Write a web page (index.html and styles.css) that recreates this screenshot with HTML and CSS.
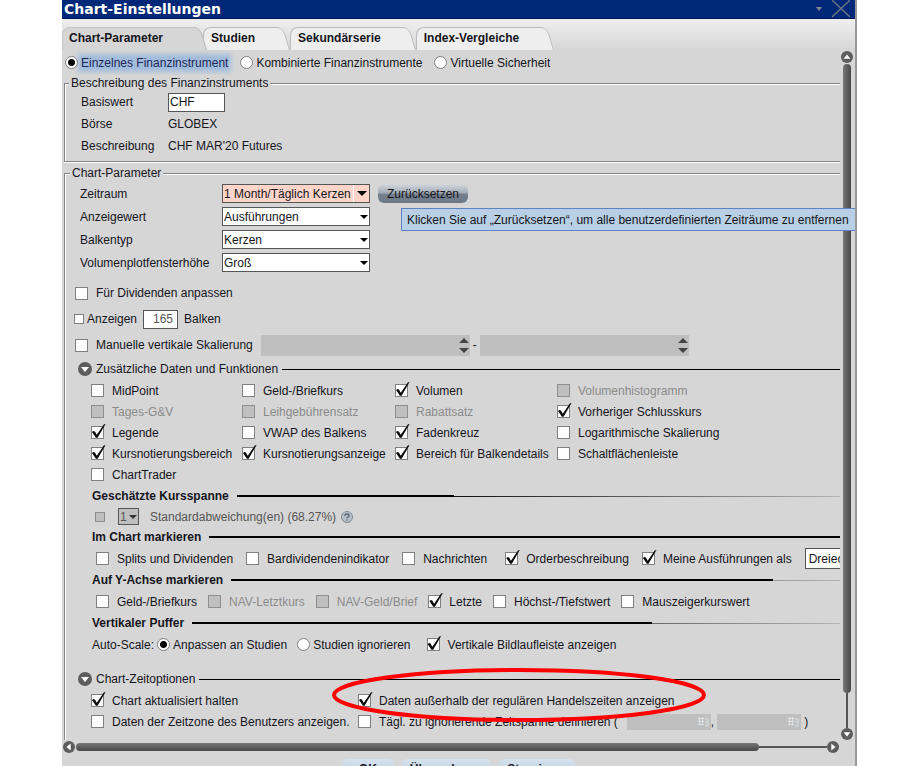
FILE: index.html
```html
<!DOCTYPE html>
<html lang="de">
<head>
<meta charset="utf-8">
<title>Chart-Einstellungen</title>
<link rel="stylesheet" href="styles.css">
</head>
<body>
<main class="window">
  <header class="titlebar">
    <h1>Chart-Einstellungen</h1>
    <button class="title-btn" type="button" aria-label="Menü"><svg width="6" height="4" viewBox="0 0 6 4"><path d="M0 0H6L3 4Z" fill="#7f8890"/></svg></button>
    <button class="title-btn" type="button" aria-label="Schließen"><svg width="18" height="18" viewBox="0 0 18 18"><path d="M0 0L18 17M18 0L0 17" stroke="#6c7884" stroke-width="1.3" fill="none"/></svg></button>
  </header>

  <nav class="tabs">
    <button class="tab active" type="button">Chart-Parameter<svg class="cap" viewBox="0 0 14 23"><path class="fill" d="M0 0C5 0 7 2 9 7L14 23H0Z"/><path class="edge" d="M0 .5C5 .5 7 3 9 8L13.500 23"/></svg></button>
    <button class="tab" type="button">Studien<svg class="cap" viewBox="0 0 14 23"><path class="fill" d="M0 0C5 0 7 2 9 7L14 23H0Z"/><path class="edge" d="M0 .5C5 .5 7 3 9 8L13.500 23"/></svg></button>
    <button class="tab" type="button">Sekundärserie<svg class="cap" viewBox="0 0 14 23"><path class="fill" d="M0 0C5 0 7 2 9 7L14 23H0Z"/><path class="edge" d="M0 .5C5 .5 7 3 9 8L13.500 23"/></svg></button>
    <button class="tab" type="button">Index-Vergleiche<svg class="cap" viewBox="0 0 14 23"><path class="fill" d="M0 0C5 0 7 2 9 7L14 23H0Z"/><path class="edge" d="M0 .5C5 .5 7 3 9 8L13.500 23"/></svg></button>
  </nav>

  <div class="body">
    <div class="content">
      <div class="row modes">
        <label class="radio focus"><input type="radio" name="mode" checked><span>Einzelnes Finanzinstrument</span></label>
        <label class="radio"><input type="radio" name="mode"><span>Kombinierte Finanzinstrumente</span></label>
        <label class="radio"><input type="radio" name="mode"><span>Virtuelle Sicherheit</span></label>
      </div>

      <fieldset class="group instrument">
        <legend>Beschreibung des Finanzinstruments</legend>
        <div class="pair"><label for="sym">Basiswert</label><input class="text" id="sym" type="text" value="CHF"></div>
        <div class="pair"><span>Börse</span><span>GLOBEX</span></div>
        <div class="pair"><span>Beschreibung</span><span>CHF MAR'20 Futures</span></div>
      </fieldset>

      <fieldset class="group params">
        <legend>Chart-Parameter</legend>
        <div class="field"><label for="period">Zeitraum</label><span class="select warn"><select id="period"><option>1 Month/Täglich Kerzen</option></select></span><button class="reset" type="button">Zurücksetzen</button></div>
        <div class="field"><label for="shown">Anzeigewert</label><span class="select"><select id="shown"><option>Ausführungen</option></select></span></div>
        <div class="field"><label for="bar">Balkentyp</label><span class="select"><select id="bar"><option>Kerzen</option></select></span></div>
        <div class="field"><label for="vol">Volumenplotfensterhöhe</label><span class="select"><select id="vol"><option>Groß</option></select></span></div>

        <div class="row option"><label class="check"><input type="checkbox"><span>Für Dividenden anpassen</span></label></div>
        <div class="row option"><label class="check small"><input type="checkbox"><span>Anzeigen</span></label><input class="text bars" id="bars" type="text" value="165"><label for="bars">Balken</label></div>
        <div class="row option scale">
          <label class="check"><input type="checkbox"><span>Manuelle vertikale Skalierung</span></label>
          <span class="spin"><input type="text" aria-label="Skalierung von" disabled><svg width="10" height="15" viewBox="0 0 10 15"><path d="M0 5L5 0L10 5ZM0 10H10L5 15Z" fill="#444"/></svg></span>
          <span>-</span>
          <span class="spin"><input type="text" aria-label="Skalierung bis" disabled><svg width="10" height="15" viewBox="0 0 10 15"><path d="M0 5L5 0L10 5ZM0 10H10L5 15Z" fill="#444"/></svg></span>
        </div>

        <div class="fold"><button type="button" class="round" aria-label="Einklappen"><svg viewBox="0 0 14 14"><circle cx="7" cy="7" r="7"/><path d="M3 5H11L7 10Z"/></svg></button><span>Zusätzliche Daten und Funktionen</span><i></i></div>
        <div class="checks">
          <label class="check"><input type="checkbox"><span>MidPoint</span></label>
          <label class="check"><input type="checkbox"><span>Geld-/Briefkurs</span></label>
          <label class="check"><input type="checkbox" checked><span>Volumen</span></label>
          <label class="check"><input type="checkbox" disabled><span>Volumenhistogramm</span></label>
          <label class="check"><input type="checkbox" disabled><span>Tages-G&amp;V</span></label>
          <label class="check"><input type="checkbox" disabled><span>Leihgebührensatz</span></label>
          <label class="check"><input type="checkbox" disabled><span>Rabattsatz</span></label>
          <label class="check"><input type="checkbox" checked><span>Vorheriger Schlusskurs</span></label>
          <label class="check"><input type="checkbox" checked><span>Legende</span></label>
          <label class="check"><input type="checkbox"><span>VWAP des Balkens</span></label>
          <label class="check"><input type="checkbox" checked><span>Fadenkreuz</span></label>
          <label class="check"><input type="checkbox"><span>Logarithmische Skalierung</span></label>
          <label class="check"><input type="checkbox" checked><span>Kursnotierungsbereich</span></label>
          <label class="check"><input type="checkbox" checked><span>Kursnotierungsanzeige</span></label>
          <label class="check"><input type="checkbox" checked><span>Bereich für Balkendetails</span></label>
          <label class="check"><input type="checkbox"><span>Schaltflächenleiste</span></label>
          <label class="check"><input type="checkbox"><span>ChartTrader</span></label>
        </div>

        <h2 class="range">Geschätzte Kursspanne<i></i></h2>
        <div class="row deviation">
          <input type="checkbox" id="dev" disabled>
          <span class="select mini"><select disabled aria-label="Anzahl"><option>1</option></select></span>
          <label for="dev">Standardabweichung(en) (68.27%)</label>
          <svg class="help" width="12" height="12" viewBox="0 0 12 12"><circle cx="6" cy="6" r="5.500" fill="#b4bfcc" stroke="#7f8994"/><path d="M4 4.800C4 2.500 8 2.500 8 4.700C8 6 6 6 6 7.300M6 8.400V9.600" fill="none" stroke="#56616e" stroke-width="1.400"/></svg>
        </div>

        <h2 class="full">Im Chart markieren<i></i></h2>
        <div class="row marks">
          <label class="check"><input type="checkbox"><span>Splits und Dividenden</span></label>
          <label class="check"><input type="checkbox"><span>Bardividendenindikator</span></label>
          <label class="check wide"><input type="checkbox"><span>Nachrichten</span></label>
          <label class="check"><input type="checkbox" checked><span>Orderbeschreibung</span></label>
          <label class="check"><input type="checkbox" checked><span>Meine Ausführungen als</span></label>
          <select class="shape" aria-label="Form"><option>Dreiecke</option></select>
        </div>

        <h2 class="axis">Auf Y-Achse markieren<i></i></h2>
        <div class="row marks dense">
          <label class="check"><input type="checkbox"><span>Geld-/Briefkurs</span></label>
          <label class="check"><input type="checkbox" disabled><span>NAV-Letztkurs</span></label>
          <label class="check"><input type="checkbox" disabled><span>NAV-Geld/Brief</span></label>
          <label class="check"><input type="checkbox" checked><span>Letzte</span></label>
          <label class="check"><input type="checkbox"><span>Höchst-/Tiefstwert</span></label>
          <label class="check"><input type="checkbox"><span>Mauszeigerkurswert</span></label>
        </div>

        <h2 class="buffer">Vertikaler Puffer<i></i></h2>
        <div class="row auto">
          <span>Auto-Scale:</span>
          <label class="radio"><input type="radio" name="auto" checked><span>Anpassen an Studien</span></label>
          <label class="radio"><input type="radio" name="auto"><span>Studien ignorieren</span></label>
          <label class="check"><input type="checkbox" checked><span>Vertikale Bildlaufleiste anzeigen</span></label>
        </div>

        <div class="fold time"><button type="button" class="round" aria-label="Einklappen"><svg viewBox="0 0 14 14"><circle cx="7" cy="7" r="7"/><path d="M3 5H11L7 10Z"/></svg></button><span>Chart-Zeitoptionen</span><i></i></div>
        <div class="times">
          <label class="check"><input type="checkbox" checked><span>Chart aktualisiert halten</span></label>
          <div class="marked">
            <label class="check"><input type="checkbox" checked><span>Daten außerhalb der regulären Handelszeiten anzeigen</span></label>
            <svg class="ellipse" width="376" height="56" viewBox="0 0 376 56"><ellipse cx="188" cy="28" rx="185" ry="25"/></svg>
          </div>
          <label class="check"><input type="checkbox"><span>Daten der Zeitzone des Benutzers anzeigen.</span></label>
          <div class="row ignore">
            <label class="check"><input type="checkbox"><span>Tägl. zu ignorierende Zeitspanne definieren (</span></label>
            <span class="clock"><input type="text" aria-label="Beginn" disabled><svg width="11" height="10" viewBox="0 0 11 10"><path d="M0 1.500H6M0 4.500H6M0 7.500H6M1.500 0V8M4.500 0V8M7 2H10V5H7M10 5V9H7" fill="none" stroke="#dce1e5"/></svg></span>
            <span>,</span>
            <span class="clock"><input type="text" aria-label="Ende" disabled><svg width="11" height="10" viewBox="0 0 11 10"><path d="M0 1.500H6M0 4.500H6M0 7.500H6M1.500 0V8M4.500 0V8M7 2H10V5H7M10 5V9H7" fill="none" stroke="#dce1e5"/></svg></span>
            <span class="close">)</span>
          </div>
        </div>
      </fieldset>
    </div>

    <div class="vscroll">
      <button type="button" class="round" aria-label="Nach oben"><svg viewBox="0 0 14 14"><circle cx="7" cy="7" r="7"/><path d="M3 9H11L7 4Z"/></svg></button>
      <div class="thumb"></div><div class="track"></div>
      <button type="button" class="round" aria-label="Nach unten"><svg viewBox="0 0 14 14"><circle cx="7" cy="7" r="7"/><path d="M3 5H11L7 10Z"/></svg></button>
    </div>
  </div>

  <div class="hscroll">
    <button type="button" class="round" aria-label="Nach links"><svg viewBox="0 0 14 14"><circle cx="7" cy="7" r="7"/><path d="M9 3V11L4 7Z"/></svg></button>
    <div class="thumb"></div><div class="track"></div>
    <button type="button" class="round" aria-label="Nach rechts"><svg viewBox="0 0 14 14"><circle cx="7" cy="7" r="7"/><path d="M5 3V11L10 7Z"/></svg></button>
  </div>

  <footer class="actions">
    <button type="button">OK</button>
    <button type="button">Übernehmen</button>
    <button type="button">Stornieren</button>
  </footer>

  <div class="tooltip" role="tooltip">Klicken Sie auf „Zurücksetzen“, um alle benutzerdefinierten Zeiträume zu entfernen</div>
</main>
</body>
</html>
```
FILE: styles.css
```css
* { box-sizing: border-box; }

body {
  margin: 0;
  background: #fff;
  color: #15151c;
  font: 12px/16px "Liberation Sans", Arial, sans-serif;
}

button, input, select { font: inherit; color: inherit; margin: 0; }
button { padding: 0; border: 0; background: none; }

.window {
  position: relative;
  height: 100vh;
  margin: 0 63px 0 62px;
  overflow: hidden;
  background: #d6d6d6;
  border-right: 2px solid #999;
  white-space: nowrap;
}

/* Title bar and tabs */
.titlebar {
  display: flex;
  align-items: center;
  gap: 10px;
  height: 19px;
  padding: 0 5px 0 2px;
  background: #002878;
  border-bottom: 1px solid #001658;
}
.titlebar h1 {
  flex: 1;
  margin: 0;
  color: #fff;
  font: bold 14px/18px "DejaVu Sans", Verdana, sans-serif;
}
.title-btn { display: flex; }

.tabs {
  display: flex;
  height: 31px;
  padding-top: 8px;
  background: linear-gradient(#efefef, #d6d6d6);
}
.tab {
  position: relative;
  height: 23px;
  margin-right: 14px;
  padding: 0 21px 2px 7px;
  border: 1px solid #bbb;
  border-width: 1px 0 0 1px;
  border-top-left-radius: 8px;
  background: #eee;
  font-weight: bold;
}
.cap { position: absolute; left: 100%; top: -1px; width: 14px; height: 23px; }
.cap .fill { fill: #eee; }
.cap .edge { fill: none; stroke: #bbb; }
.tab.active {
  z-index: 1;
  margin-right: 10px;
  padding: 0 30px 2px 6px;
  background: #d6d6d6;
  border-color: #c4c4c4;
}
.active .cap .fill { fill: #d6d6d6; }

/* Scrollable body */
.body { display: grid; grid-template-columns: minmax(0, 1fr) 15px; }
.content {
  display: flex;
  flex-direction: column;
  min-width: 0;
  height: 690px;
  padding-left: 2px;
  overflow: hidden;
}
.row { display: flex; align-items: center; }
.modes { height: 25px; gap: 12px; padding-left: 1px; }

.check, .radio { display: flex; align-items: center; }
.check { gap: 8px; }
.radio { gap: 3px; }
.focus span { background: #a3bcdc; box-shadow: 0 0 5px 3px #a3bcdc; line-height: 12px; color: #1c2858; }
.focus input { z-index: 1; }

input[type="checkbox"], input[type="radio"] {
  appearance: none;
  flex: none;
  position: relative;
  width: 13px;
  height: 13px;
  border: 1px solid #808080;
  background: #fff;
}
input[type="radio"] { border-radius: 50%; }
input[type="radio"]:checked { background: radial-gradient(circle, #000 0 3px, #fff 4px); }
input[type="checkbox"]:checked::after {
  content: "";
  position: absolute;
  left: 0;
  top: -3px;
  width: 14px;
  height: 14px;
  background: #0c0c0c;
  clip-path: polygon(0 58%, 10% 50%, 21% 54%, 34% 76%, 84% 4%, 97% 0, 40% 98%, 28% 98%);
}
input[type="checkbox"]:disabled { background: #bfbfbf; border-color: #8e8e8e; }
.check:has(:disabled) { color: #8b8b8b; }

.group {
  margin: 0;
  padding: 0;
  border: 1px solid #858585;
  border-right: 0;
  box-shadow: inset 1px 1px #fff, 0 1px #fff;
  min-width: 0;
}
.group legend { margin-left: 4px; padding: 0 2px; line-height: 16px; background: #d6d6d6; }
.instrument { margin-bottom: 3px; padding-bottom: 4px; }
.pair {
  display: grid;
  grid-template-columns: 87px auto 1fr;
  align-items: center;
  height: 22px;
  padding-left: 16px;
}
.text { height: 19px; padding: 0 1px; border: 1px solid #555; background: #fff; }
.pair .text { width: 57px; }

.params { flex: 1; padding: 1px 0 0 1px; border-bottom: 0; }
.field {
  display: grid;
  grid-template-columns: 142px 148px 90px;
  align-items: center;
  height: 23px;
  padding-left: 14px;
}
.select { position: relative; display: flex; }
.select select, .shape {
  appearance: none;
  width: 100%;
  height: 19px;
  padding: 0 1px;
  border: 1px solid #555;
  border-radius: 0;
  background: #fff;
  opacity: 1;
}
.select::after {
  content: "";
  position: absolute;
  right: 2px;
  top: 8px;
  border: 4px solid transparent;
  border-top-color: #000;
  border-bottom: 0;
  pointer-events: none;
}
.warn select {
  background: linear-gradient(#fff, #fff) right 15px top / 1px 100% no-repeat #ffd5ca;
}
.warn::after { right: 3px; top: 7px; border-width: 5px 5px 0; }
.reset {
  height: 19px;
  margin-left: 8px;
  margin-right: -8px;
  border-radius: 6px;
  background: linear-gradient(#d3d8dd, #a4adb7 45%, #74808e 55%, #6d7986);
}

.option { height: 26px; padding-left: 9px; }
.field + .option { margin-top: 6px; }
.check.small { gap: 3px; margin-left: -1px; }
.small input { width: 10px; height: 10px; }
.bars { width: 35px; margin: 0 6px; padding-right: 4px; text-align: right; color: #555; }
.scale { gap: 3px; }
.spin, .clock { display: flex; align-items: center; background: #bfbfbf; }
.spin input, .clock input { border: 0; padding: 0; background: none; min-width: 0; }
.spin { width: 209px; height: 21px; }
.spin input { flex: 1; }
.spin svg { margin-right: 1px; }
.option .check:has(+ .spin) { margin-right: 5px; }

.fold { display: flex; align-items: center; gap: 4px; height: 22px; padding-left: 12px; }
.fold i { flex: 1; height: 1px; background: #000; }
.round { flex: none; display: block; width: 12px; height: 12px; }
.round svg { display: block; width: 100%; height: 100%; }
.round circle { fill: #5d5d5d; }
.round path { fill: #fff; }
.fold .round { width: 14px; height: 14px; }

.checks {
  display: grid;
  grid-template-columns: 151px 153px 162px auto;
  grid-auto-rows: 21px;
  padding-left: 25px;
}

h2 {
  display: flex;
  align-items: center;
  gap: 8px;
  height: 22px;
  margin: 0;
  padding-left: 26px;
  font-size: 12px;
}
h2 i { flex: 1; height: 2px; background: linear-gradient(#000, #000) 0 0 / var(--thick) 2px no-repeat, linear-gradient(90deg, #000 30%, #b4b4b4) 0 1px / 100% 1px no-repeat; }
.range { --thick: 36%; }
.full { --thick: 100%; }
.axis { --thick: 89%; }
.buffer { --thick: 71%; }

.deviation { height: 19px; padding-left: 29px; color: #555; }
.deviation > input[type="checkbox"] { width: 10px; height: 10px; margin-right: 13px; }
.mini { width: 21px; margin-right: 11px; }
.mini select { background: #bfbfbf; color: #555; height: 17px; }
.mini::after { top: 7px; border-top-color: #333; }
.help { margin-left: 5px; }

.marks { height: 21px; gap: 13px; padding-left: 30px; }
.dense { gap: 11px; }
.marks .wide { margin-right: 5px; }
.shape { flex: none; width: 80px; height: 21px; padding: 0 3px; }

.auto { height: 21px; padding-left: 26px; }
.auto .radio { margin-left: 3px; margin-right: 7px; }
.auto .check { margin-left: 9px; }

.time { margin-top: 13px; }
.times {
  display: grid;
  grid-template-columns: 267px auto;
  grid-auto-rows: 21px;
  padding-left: 25px;
}
.times > * { display: flex; align-items: center; }
.marked { position: relative; }
.ellipse { position: absolute; left: -27px; top: -23px; pointer-events: none; z-index: 1; }
.ellipse ellipse { fill: none; stroke: #f00; stroke-width: 4; }
.ignore .check { margin-right: 6px; }
.clock { width: 84px; height: 16px; margin-left: 3px; }
.clock input { flex: 1; }
.clock svg { margin-right: 2px; }
.close { margin-left: 3px; }

/* Scroll bars */
.vscroll { display: flex; flex-direction: column; align-items: center; padding: 1px 2px 0 0; height: 690px; }
.vscroll .thumb { flex: 629; width: 8px; margin-top: 1px; border-radius: 4px; background: linear-gradient(90deg, #777, #484848); }
.vscroll .track { flex: 35; width: 2px; background: #555; }
.hscroll { display: flex; align-items: center; height: 14px; padding: 0 16px 0 1px; }
.hscroll .thumb { flex: 684; height: 8px; margin-left: 1px; border-radius: 4px; background: linear-gradient(#777, #484848); }
.hscroll .track { flex: 68; height: 2px; background: #555; }

.actions { display: flex; justify-content: center; gap: 6px; padding-top: 5px; }
.actions button {
  height: 19px;
  padding: 0 9px;
  border-radius: 7px;
  background: linear-gradient(#d6e2ee, #b9cbe0);
  font-weight: bold;
}
.actions button:first-child { padding: 0 18px; }

.tooltip {
  position: absolute;
  left: 339px;
  right: 0;
  top: 208px;
  overflow: hidden;
  padding: 3px 0 2px 5px;
  border: 1px solid #5d83c4;
  border-right: 0;
  background: #b8cfe6;
}
```
